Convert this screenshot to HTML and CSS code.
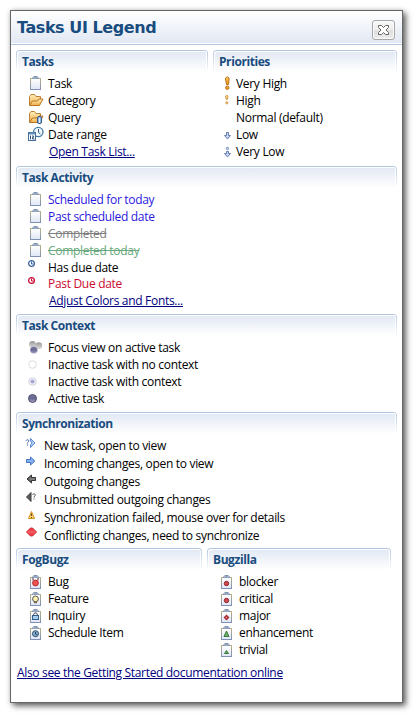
FILE: index.html
```html
<!DOCTYPE html>
<html lang="en">
<head>
<meta charset="utf-8">
<title>Tasks UI Legend</title>
<link rel="stylesheet" href="styles.css">
</head>
<body>
<svg class="defs" width="0" height="0" aria-hidden="true">
  <defs>
    <linearGradient id="paper" x1="0" y1="0" x2="0" y2="1"><stop offset="0" stop-color="#fff"/><stop offset="1" stop-color="#dfe6f5"/></linearGradient>
    <linearGradient id="edge" x1="0" y1="0" x2="0" y2="1"><stop offset="0" stop-color="#b9b187"/><stop offset="1" stop-color="#8190b5"/></linearGradient>
    <linearGradient id="gold" x1="0" y1="0" x2="0" y2="1"><stop offset="0" stop-color="#fff0bd"/><stop offset="1" stop-color="#f0ae45"/></linearGradient>
    <linearGradient id="orange" x1="0" y1="0" x2="0" y2="1"><stop offset="0" stop-color="#ffd26c"/><stop offset="1" stop-color="#ee8f08"/></linearGradient>
    <linearGradient id="ball" x1="0" y1="0" x2="0" y2="1"><stop offset="0" stop-color="#77779c"/><stop offset=".5" stop-color="#686894"/><stop offset="1" stop-color="#aaa9cb"/></linearGradient>
    <linearGradient id="grayball" x1="0" y1="0" x2="0" y2="1"><stop offset="0" stop-color="#999"/><stop offset="1" stop-color="#ddd"/></linearGradient>
    <symbol id="task" viewBox="0 0 16 17">
      <rect x="2.5" y="4.5" width="10" height="11" fill="url(#paper)" stroke="url(#edge)"/>
      <path d="M4 5V3.500h1.500V2h4v1.500H11V5z" fill="#8493af"/><path d="M5 4h5" stroke="#aab9d1"/>
    </symbol>
    <symbol id="folder" viewBox="0 0 16 17">
      <path d="M1.500 14V5.500L3 3.500h3.500L8 5.500h4.500V8" fill="url(#gold)" stroke="#bd8131"/>
      <path d="M1.500 14.500L4.500 10h5l1.500-2h4l-3.500 6.500z" fill="url(#gold)" stroke="#b87525"/>
    </symbol>
    <symbol id="query" viewBox="0 0 16 17">
      <use href="#folder" width="16" height="17"/>
      <rect x="9.500" y="8.500" width="4" height="7" rx="1.500" fill="#9ab7df" stroke="#315886"/><path d="M11.500 10v5" stroke="#e1efff"/>
    </symbol>
    <symbol id="range" viewBox="0 0 16 17">
      <circle cx="10.300" cy="7" r="4.700" fill="#f2faff" stroke="#427ba5" stroke-width="1.300"/><path d="M10.500 4v3.500l2 1.500" fill="none" stroke="#315c86"/>
      <rect x=".5" y="7.500" width="7" height="8" fill="#fff" stroke="#466f9c"/><path d="M1 8.500h6" stroke="#6490bb" stroke-width="2"/>
      <path d="M2.500 10.500v4M4 11h1.500v1.500H4.500v1.500H6.500" fill="none" stroke="#2b557e"/>
    </symbol>
    <symbol id="veryhigh" viewBox="0 0 16 17">
      <path d="M1.500 5c0-1.500 1-2 1.800-2s1.800.5 1.800 2L4.500 10.500h-2z" fill="url(#orange)" stroke="#b96d16"/><circle cx="3.300" cy="13.700" r="1.700" fill="#f1a32b" stroke="#b96d16"/>
    </symbol>
    <symbol id="high" viewBox="0 0 16 17">
      <path d="M1.500 5.500c0-1.500 2.500-1.500 2.500 0L3.300 8.500h-1z" fill="#ffd077" stroke="#c88a3a" stroke-width=".8"/><circle cx="2.800" cy="11.800" r="1.100" fill="#ffd077" stroke="#c88a3a" stroke-width=".8"/>
    </symbol>
    <symbol id="low" viewBox="0 0 16 17"><path d="M2.500 7.500h2v3h2L3.500 14 .5 10.500h2z" fill="#c8d8f2" stroke="#657caf"/></symbol>
    <symbol id="verylow" viewBox="0 0 16 17"><path d="M2.500 9.500h2v2h2L3.500 15 .5 11.500h2z" fill="#c8d8f2" stroke="#657caf"/><circle cx="3.500" cy="6.500" r="1.200" fill="#c8d8f2" stroke="#657caf" stroke-width=".8"/></symbol>
    <symbol id="clock" viewBox="0 0 16 17"><circle cx="3.500" cy="5.500" r="2.900" fill="#fff" stroke="currentColor" stroke-width="1.300"/><path d="M3.500 3.500v2.500h2" fill="none" stroke="currentColor"/></symbol>
    <symbol id="focus" viewBox="0 0 16 17">
      <circle cx="4.500" cy="6.500" r="3.400" fill="url(#grayball)"/><circle cx="10.800" cy="7.700" r="3.400" fill="url(#grayball)"/><circle cx="5.800" cy="12" r="3.800" fill="url(#ball)" stroke="#fff" stroke-width=".4"/>
    </symbol>
    <symbol id="empty" viewBox="0 0 16 17"><circle cx="4.500" cy="9.500" r="3.800" fill="#fff" stroke="#dcdce0"/></symbol>
    <symbol id="inactive" viewBox="0 0 16 17"><circle cx="4.500" cy="9.500" r="3.800" fill="#f2f2fa" stroke="#d3d3df"/><circle cx="4.500" cy="9.500" r="2.100" fill="#a6a7d0"/></symbol>
    <symbol id="active" viewBox="0 0 16 17"><circle cx="4.500" cy="9.500" r="4" fill="url(#ball)" stroke="#50506f"/></symbol>
    <symbol id="new" viewBox="0 0 16 18"><path d="M5.500 2.500L10 7l-4.500 4.500V9L7 7 5.500 5z" fill="#b4d0fb" stroke="#4b7dce" stroke-width=".9"/><path d="M1 4.800C1.500 3.300 4.200 3.500 3.700 5.300 3.500 6 2.500 6 2.500 7.500M2.500 8.500v1" fill="none" stroke="#3a5ea5"/></symbol>
    <symbol id="incoming" viewBox="0 0 16 18"><path d="M1.500 5.500h4v-2.500L9.800 7l-4.300 4V8.500h-4z" fill="#86b1f5" stroke="#4371bd"/></symbol>
    <symbol id="outgoing" viewBox="0 0 16 18"><path d="M10.500 5.500h-4V3L2 7l4.500 4V8.500h4z" fill="#666" stroke="#343434"/><path d="M5 7h5" stroke="#999"/></symbol>
    <symbol id="unsent" viewBox="0 0 16 18"><path d="M6 2.500V11.500L1.500 7z" fill="#5b5b5b" stroke="#3c3c3c"/><path d="M7.500 4.800C8 3.300 10.800 3.500 10.200 5.300 10 6 9 6.300 9 7.500M9 8.500v1" fill="none" stroke="#515151"/></symbol>
    <symbol id="warning" viewBox="0 0 16 18"><path d="M6.500 3.500L9.500 10.500h-6z" fill="#ffda73" stroke="#d58c20" stroke-linejoin="round"/><path d="M6.500 5.500v2.500M6.500 9v1" stroke="#754817"/></symbol>
    <symbol id="conflict" viewBox="0 0 16 18"><path d="M1.500 6L5.500 2h2L11.500 6l-4 4h-2z" fill="#ed424b" stroke="#cb2831"/><path d="M3 6h7" stroke="#f97379"/></symbol>
    <symbol id="item" viewBox="0 0 16 17"><use href="#task" y="1" width="16" height="17"/></symbol>
    <symbol id="bug" viewBox="0 0 16 17"><use href="#item" width="16" height="17"/><path d="M5 6v2.500M10 6v2.500" stroke="#55242c"/><circle cx="7.500" cy="11" r="2.900" fill="#ed5351" stroke="#b72e32"/></symbol>
    <symbol id="feature" viewBox="0 0 16 17"><use href="#item" width="16" height="17"/><circle cx="7.500" cy="9.900" r="2.900" fill="#fff0ac" stroke="#555"/><path d="M6 13.500h3" stroke="#776b46" stroke-width="1.500"/></symbol>
    <symbol id="inquiry" viewBox="0 0 16 17"><use href="#item" width="16" height="17"/><path d="M5.500 9.500C5.500 6 9.500 6 9.500 9.500" fill="none" stroke="#333"/><rect x="4.500" y="9.500" width="6" height="4" fill="#a4ccf0" stroke="#345e8b"/></symbol>
    <symbol id="schedule" viewBox="0 0 16 17"><use href="#item" width="16" height="17"/><circle cx="7.500" cy="10.700" r="3" fill="#83afd5" stroke="#314b67"/><path d="M7.500 9v2l1.500 1" fill="none" stroke="#243e59"/></symbol>
    <symbol id="blocker" viewBox="0 0 16 17"><use href="#item" width="16" height="17"/><circle cx="7.500" cy="11.500" r="2.200" fill="#ca4b50" stroke="#94242a"/></symbol>
    <symbol id="major" viewBox="0 0 16 17"><use href="#item" width="16" height="17"/><path d="M7.500 8.500L10.500 11.500l-3 3L4.500 11.500z" fill="#ac2c34"/><path d="M7.500 10.800v1.400M6.800 11.500h1.400" stroke="#f0a6a8" stroke-width=".7"/></symbol>
    <symbol id="enhance" viewBox="0 0 16 17"><use href="#item" width="16" height="17"/><path d="M7.500 8L10 13.500H5z" fill="#78ad73" stroke="#33783a"/></symbol>
    <symbol id="trivial" viewBox="0 0 16 17"><use href="#item" width="16" height="17"/><path d="M7.500 10.500L9.500 13.500h-4z" fill="#69a663" stroke="#39813a"/></symbol>
  </defs>
</svg>
<main class="panel">
  <header class="title-bar">
    <h1>Tasks UI Legend</h1>
    <button class="close" aria-label="Close"><svg width="11" height="10" viewBox="0 0 11 10"><path d="M.5.5h3l2 2 2-2h3v2L8 5l2.500 2.500v2h-3l-2-2-2 2h-3v-2L3 5 .5 2.500z" fill="#fff" stroke="#66665f"/></svg></button>
  </header>
  <div class="pair top">
    <section>
      <h2>Tasks</h2>
      <ul>
        <li><svg><use href="#task"/></svg><span>Task</span></li>
        <li><svg><use href="#folder"/></svg><span>Category</span></li>
        <li><svg><use href="#query"/></svg><span>Query</span></li>
        <li><svg><use href="#range"/></svg><span>Date range</span></li>
        <li class="link-row"><a href="#">Open Task List...</a></li>
      </ul>
    </section>
    <section class="priorities">
      <h2>Priorities</h2>
      <ul>
        <li><svg><use href="#veryhigh"/></svg><span>Very High</span></li>
        <li><svg><use href="#high"/></svg><span>High</span></li>
        <li><svg></svg><span>Normal (default)</span></li>
        <li><svg><use href="#low"/></svg><span>Low</span></li>
        <li><svg><use href="#verylow"/></svg><span>Very Low</span></li>
      </ul>
    </section>
  </div>
  <section class="activity">
    <h2>Task Activity</h2>
    <ul>
      <li class="scheduled"><svg><use href="#task"/></svg><span>Scheduled for today</span></li>
      <li class="scheduled"><svg><use href="#task"/></svg><span>Past scheduled date</span></li>
      <li class="completed"><svg><use href="#task"/></svg><span>Completed</span></li>
      <li class="completed-today"><svg><use href="#task"/></svg><span>Completed today</span></li>
      <li><svg class="due"><use href="#clock"/></svg><span>Has due date</span></li>
      <li class="past-due"><svg><use href="#clock"/></svg><span>Past Due date</span></li>
      <li class="link-row"><a href="#">Adjust Colors and Fonts...</a></li>
    </ul>
  </section>
  <section class="context">
    <h2>Task Context</h2>
    <ul>
      <li><svg><use href="#focus"/></svg><span>Focus view on active task</span></li>
      <li><svg><use href="#empty"/></svg><span>Inactive task with no context</span></li>
      <li><svg><use href="#inactive"/></svg><span>Inactive task with context</span></li>
      <li><svg><use href="#active"/></svg><span>Active task</span></li>
    </ul>
  </section>
  <section class="sync">
    <h2>Synchronization</h2>
    <ul>
      <li><svg><use href="#new"/></svg><span>New task, open to view</span></li>
      <li><svg><use href="#incoming"/></svg><span>Incoming changes, open to view</span></li>
      <li><svg><use href="#outgoing"/></svg><span>Outgoing changes</span></li>
      <li><svg><use href="#unsent"/></svg><span>Unsubmitted outgoing changes</span></li>
      <li><svg><use href="#warning"/></svg><span>Synchronization failed, mouse over for details</span></li>
      <li><svg><use href="#conflict"/></svg><span>Conflicting changes, need to synchronize</span></li>
    </ul>
  </section>
  <div class="pair bottom">
    <section>
      <h2>FogBugz</h2>
      <ul>
        <li><svg><use href="#bug"/></svg><span>Bug</span></li>
        <li><svg><use href="#feature"/></svg><span>Feature</span></li>
        <li><svg><use href="#inquiry"/></svg><span>Inquiry</span></li>
        <li><svg><use href="#schedule"/></svg><span>Schedule Item</span></li>
      </ul>
    </section>
    <section class="bugzilla">
      <h2>Bugzilla</h2>
      <ul>
        <li><svg><use href="#blocker"/></svg><span>blocker</span></li>
        <li><svg><use href="#blocker"/></svg><span>critical</span></li>
        <li><svg><use href="#major"/></svg><span>major</span></li>
        <li><svg><use href="#enhance"/></svg><span>enhancement</span></li>
        <li><svg><use href="#trivial"/></svg><span>trivial</span></li>
      </ul>
    </section>
  </div>
  <footer><a href="#">Also see the Getting Started documentation online</a></footer>
</main>
</body>
</html>
```
FILE: styles.css
```css
* { box-sizing: border-box; }
body { margin: 0; padding: 10px; height: 714px; overflow: hidden; background: #fff; color: #000; font: 12px/19px "Open Sans", sans-serif; letter-spacing: -.31px; }
.defs { position: absolute; }
.panel { width: 393px; height: 693px; border: 1px solid #666; background: #fff; box-shadow: 3px 3px 6px rgba(0,0,0,.6), 0 0 5px rgba(0,0,0,.15); }
.title-bar { height: 34px; display: flex; align-items: center; justify-content: space-between; padding: 0 7px 0 6px; background: linear-gradient(#fff, #e1e8f3); border-bottom: 1px solid #b0c7de; box-shadow: inset 0 -1px #fff; }
h1 { margin: 0; color: #194c7f; font: bold 16px/20px "DejaVu Sans", sans-serif; letter-spacing: -.43px; white-space: nowrap; }
.close { width: 23px; height: 20px; padding: 0; margin-top: 5px; display: grid; place-items: center; border: 1px solid #a7a7a7; border-radius: 3px; background: linear-gradient(#f8f8f8, #ededed 50%, #dddde0 55%, #eee); box-shadow: inset 0 0 0 1px #fafafa; }
.pair { display: grid; margin-left: 5px; }
.top { grid-template-columns: 192px 184px; gap: 5px; margin-top: 5px; height: 116px; }
.bottom { grid-template-columns: 186px 184px; gap: 5px; height: 115px; }
.activity, .context, .sync { width: 381px; margin-left: 5px; }
.activity { height: 148px; }
.context { height: 98px; }
.sync { height: 136px; }
h2 { margin: 0 0 2px; height: 22px; padding-left: 5px; color: #194c7f; font: bold 12px/21px "Open Sans", sans-serif; letter-spacing: -.42px; border: 1px solid transparent; border-bottom: 0; border-radius: 4px 4px 0 0; background: linear-gradient(#e1e8f3, #fff) padding-box, linear-gradient(#b0c5de, #fff) border-box; box-shadow: inset 1px 1px #fff, inset -1px 0 #fff; }
ul { list-style: none; margin: 0; padding: 0 0 0 12px; }
li { display: flex; height: 17px; white-space: nowrap; }
li svg { display: block; width: 16px; height: 17px; flex: none; margin-right: 4px; }
.link-row { padding-left: 21px; }
a { color: #00007f; text-decoration: underline; text-underline-offset: 1px; }
.priorities ul { padding-left: 11px; }
.priorities svg { margin-right: -4px; }
.scheduled { color: #2a17dc; }
.completed { color: #808080; }
.completed-today { color: #6aa97e; }
.completed span, .completed-today span { text-decoration: line-through; }
.due { color: #3b65a0; }
.past-due { color: #cc0a32; height: 16px; line-height: 17px; }
.sync ul { padding-left: 9px; }
.sync li { height: 18px; line-height: 20px; }
.sync svg { height: 18px; margin-right: 3px; }
footer { margin-left: 6px; letter-spacing: -.33px; }
```
